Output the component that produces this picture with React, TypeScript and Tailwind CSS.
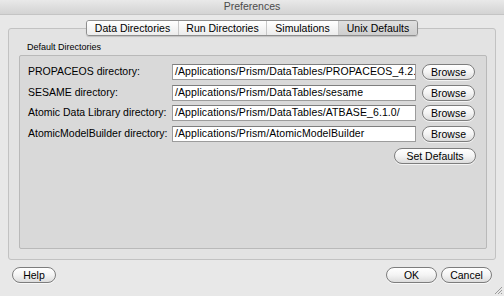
const FONT = "font-['Liberation_Sans',Arial,sans-serif]";

const ROWS = [
  { label: 'PROPACEOS directory:', path: '/Applications/Prism/DataTables/PROPACEOS_4.2.0/' },
  { label: 'SESAME directory:', path: '/Applications/Prism/DataTables/sesame' },
  { label: 'Atomic Data Library directory:', path: '/Applications/Prism/DataTables/ATBASE_6.1.0/' },
  { label: 'AtomicModelBuilder directory:', path: '/Applications/Prism/AtomicModelBuilder' },
];

const TABS = [
  { name: 'Data Directories', w: 'w-[91px]' },
  { name: 'Run Directories', w: 'w-[88px]' },
  { name: 'Simulations', w: 'w-[72px]' },
  { name: 'Unix Defaults', w: 'w-[79px]', active: true },
];

function PillButton({ children, className = '' }: { children: React.ReactNode; className?: string }) {
  return (
    <button
      className={`h-[16px] rounded-full border border-[#7d7d7d] bg-gradient-to-b from-white via-[#f4f4f4] to-[#dcdcdc] text-[10.5px] font-medium leading-none text-black shadow-[0_1px_0_rgba(255,255,255,0.7)] ${className}`}
    >
      {children}
    </button>
  );
}

function ResizeGrip() {
  return (
    <svg width="10" height="10" viewBox="0 0 10 10" className="absolute bottom-[1px] right-[1px]">
      <path d="M9 2 L2 9 M9 5 L5 9 M9 8 L8 9" stroke="#9a9a9a" strokeWidth="1" />
    </svg>
  );
}

export default function App() {
  return (
    <div className={`relative flex h-[296px] w-[504px] flex-col overflow-hidden bg-[#e8e8e8] ${FONT}`}>
      <div className="flex h-[15px] items-center justify-center border-b border-[#c4c4c4] bg-gradient-to-b from-[#e9e9e9] to-[#d3d3d3] text-[10.5px] text-[#4a4a4a]">
        Preferences
      </div>

      <div className="flex flex-col px-[8px] pt-[5px]">
        <div className="relative z-10 flex justify-center">
          <div className="flex h-[16px] overflow-hidden rounded-[3px] border border-[#8e8e8e] shadow-[0_1px_1px_rgba(0,0,0,0.15)]">
            {TABS.map((tab, i) => (
              <div
                key={tab.name}
                className={`flex items-center justify-center text-[10.5px] leading-none text-black ${tab.w} ${i > 0 ? 'border-l border-[#c8c8c8]' : ''} ${
                  tab.active
                    ? 'bg-gradient-to-b from-[#e0e0e0] to-[#cecece]'
                    : 'bg-gradient-to-b from-white to-[#ececec]'
                }`}
              >
                {tab.name}
              </div>
            ))}
          </div>
        </div>

        <div className="-mt-[8px] flex h-[232px] flex-col rounded-[3px] border border-[#c2c2c2] bg-[#e3e3e3] pb-[10px] pl-[10px] pr-[8px] pt-[12px]">
          <div className="pl-[8px] text-[9px] leading-[12px] text-black">Default Directories</div>
          <div className="mt-[2px] flex flex-1 flex-col rounded-[2px] border border-[#b9b9b9] bg-[#d9d9d9] pl-[8px] pr-[10px] pt-[8px]">
            {ROWS.map((row) => (
              <div key={row.label} className="mb-[4px] flex h-[16.5px] items-center">
                <span className="w-[144px] shrink-0 text-[10.5px] text-black">{row.label}</span>
                <div className="flex h-[16px] w-[244px] shrink-0 items-center overflow-hidden whitespace-nowrap border border-[#9c9c9c] border-t-[#7e7e7e] bg-white pl-[2px] text-[10.5px] tracking-[0.1px] text-black">
                  {row.path}
                </div>
                <PillButton className="ml-[6px] w-[53px]">Browse</PillButton>
              </div>
            ))}
            <div className="mt-[2px] flex justify-end">
              <PillButton className="w-[82px]">Set Defaults</PillButton>
            </div>
          </div>
        </div>
      </div>

      <div className="mt-[7px] flex items-center px-[12px]">
        <PillButton className="w-[44px]">Help</PillButton>
        <div className="flex-1" />
        <PillButton className="w-[51px]">OK</PillButton>
        <PillButton className="ml-[4px] w-[51px]">Cancel</PillButton>
      </div>
      <ResizeGrip />
    </div>
  );
}
